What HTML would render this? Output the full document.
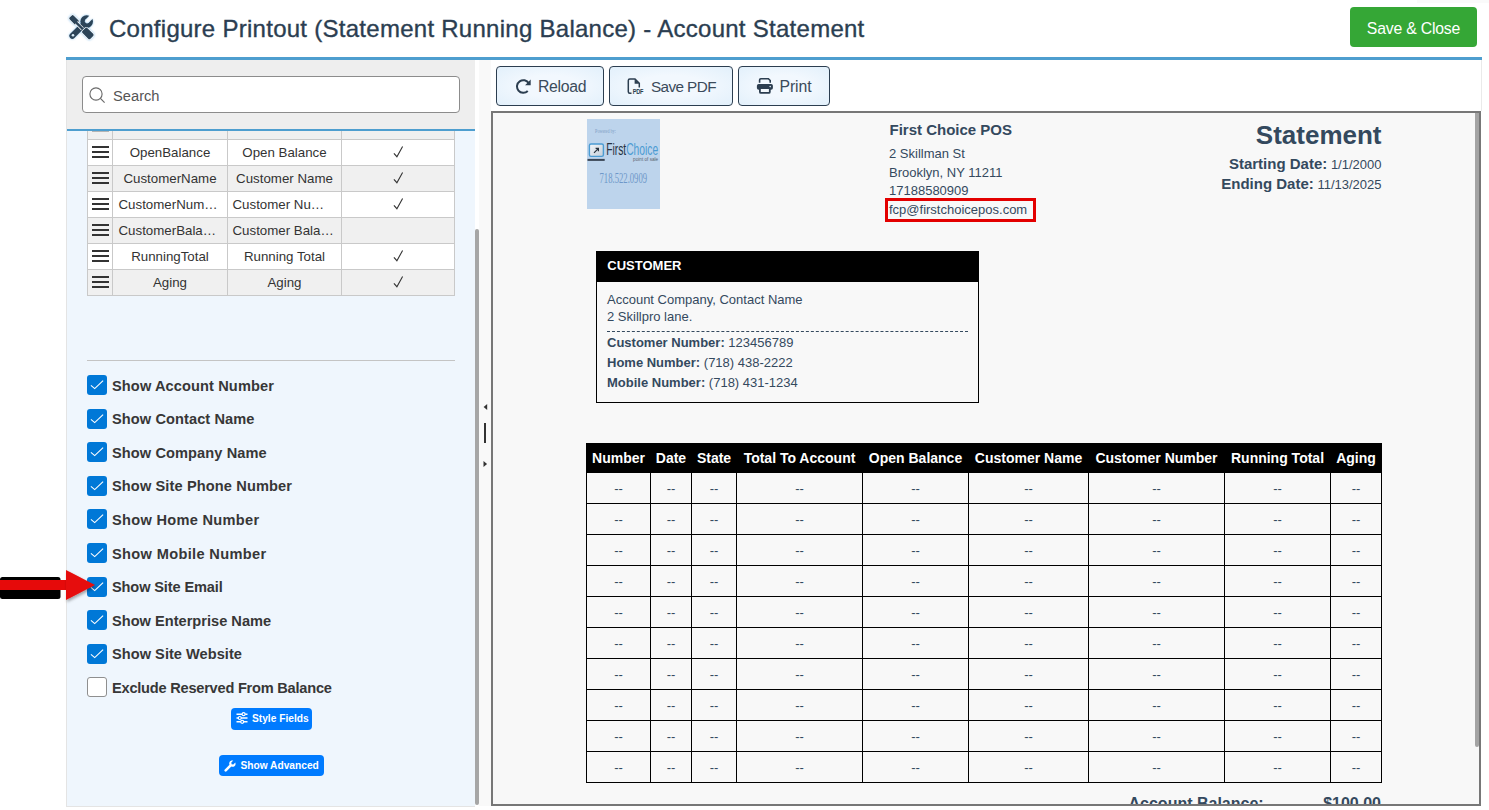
<!DOCTYPE html>
<html><head><meta charset="utf-8">
<style>
*{box-sizing:border-box;margin:0;padding:0}
html,body{width:1489px;height:810px;overflow:hidden;background:#fff;font-family:"Liberation Sans",sans-serif}
.a{position:absolute}
#title{left:109px;top:14px;-webkit-text-stroke:0.35px #2b3e51;font-size:24px;color:#2b3e51;white-space:nowrap;letter-spacing:0.27px;line-height:30px}
#save{left:1350px;top:7px;width:127px;height:40px;background:#35a736;border-radius:4px;color:#fff;font-size:15.8px;letter-spacing:-0.2px;text-align:center;line-height:43px}
#bline{left:66px;top:57px;width:1416px;height:3px;background:#4e9ecf}
#lp{left:66px;top:60px;width:409px;height:747px;background:#eff6fd;overflow:hidden}
#lptop{left:0;top:0;width:409px;height:69px;background:#eeeeee}
#lpblue{left:0;top:69px;width:409px;height:2px;background:#4e9ecf}
#search{left:16px;top:16px;width:378px;height:37px;background:#fff;border:1px solid #8c8c8c;border-radius:4px}
#search span{position:absolute;left:30px;top:9.8px;font-size:14.7px;color:#555;line-height:18px}
#clip{left:0;top:71px;width:409px;height:676px;overflow:hidden}
.row{position:absolute;left:21px;width:368px;height:27px;border:1px solid #c9c9c9;font-size:13.3px;color:#333}
.row div{position:absolute;top:0;height:25px;line-height:25px;text-align:center;white-space:nowrap}
.c1{left:0;width:25px;border-right:1px solid #c9c9c9}
.c2{left:25px;width:115px;border-right:1px solid #c9c9c9}
.c3{left:140px;width:114px;border-right:1px solid #c9c9c9}
.c4{left:254px;width:112px}
.ham{position:absolute;left:4px;width:17px;height:2px;background:#333}
.g{background:#f0f0f0}.w{background:#fff}
#hr{left:21px;top:229px;width:368px;height:1px;background:#c4c4c4}
.cb{position:absolute;left:21px;width:20px;height:20px;border-radius:3px;background:#0078d7}
.cb svg{position:absolute;left:0;top:0}
.cbe{background:#fff;border:1px solid #8f8f8f}
.lbl{position:absolute;left:46px;font-size:14.6px;font-weight:bold;color:#373737;white-space:nowrap;line-height:20px}
.pbtn{position:absolute;background:#007bff;border-radius:4px;color:#fff;font-weight:bold;font-size:10.2px;white-space:nowrap;letter-spacing:0px}
#thumbL{left:475px;top:229px;width:4px;height:576px;background:#a6a6a6;border-radius:2px}
#split{left:479px;top:60px;width:12px;height:746px;background:#f9f9f9}
.tb{position:absolute;top:66px;height:40px;border:1px solid #2c3e50;border-radius:4px;background:radial-gradient(ellipse at center,#f2f8fe 40%,#e2f0fb 100%);color:#3b4b5b;font-size:15.8px;line-height:40px;letter-spacing:-0.3px;white-space:nowrap}
#frame{left:491px;top:111px;width:990px;height:695px;border:2px solid #777;background:#f8f8f8;overflow:hidden}
#thumbR{left:1475px;top:113px;width:4px;height:634px;background:#a4a4a4;border-radius:0 0 2px 2px}
.doc{position:absolute;color:#34495e;white-space:nowrap}
table.t{position:absolute;left:94px;top:330px;border-collapse:collapse;font-size:13px;color:#34495e}
table.t th{background:#000;color:#fff;font-weight:bold;font-size:14px;height:30px;padding:0;border:1px solid #000;text-align:center}
table.t td{border:1px solid #000;height:31px;text-align:center;padding:0}
</style></head><body>
<!-- title icon -->
<svg class="a" style="left:60px;top:8px;filter:drop-shadow(0 0 1.2px rgba(90,170,230,0.7))" width="40" height="38" viewBox="60 8 40 38">
 <defs><mask id="wm" maskUnits="userSpaceOnUse" x="60" y="8" width="40" height="38"><rect x="60" y="8" width="40" height="38" fill="#fff"/>
  <g transform="rotate(45 86.7 21.5)"><rect x="84.4" y="10" width="4.6" height="11.2" fill="#000"/><circle cx="86.7" cy="21.0" r="2.3" fill="#000"/></g></mask></defs>
 <g stroke="#2c4458" fill="#2c4458">
  <path d="M72.3 35.9 L83 25.2" stroke-width="5.8" stroke-linecap="round"/>
  <circle cx="86.7" cy="21.5" r="6.3" mask="url(#wm)" stroke="none"/>
 </g>
 <circle cx="73" cy="35.2" r="1.3" fill="#d8ecf8"/>
 <g fill="#2c4458" stroke="#fff" stroke-width="1.3" paint-order="stroke">
  <g transform="rotate(45 73.6 19.4)">
   <rect x="69.5" y="16.65" width="9.3" height="5.5" rx="1.2"/>
  </g>
  <path d="M76.2 22.6 L82.4 28.8" stroke="#fff" stroke-width="3.8"/>
  <g transform="rotate(45 87.7 33.3)">
   <rect x="82.3" y="29.8" width="11.2" height="7" rx="1.6"/>
  </g>
  <path d="M75.8 22.2 L82.8 29.2" stroke="#2c4458" stroke-width="2.4"/>
 </g>
</svg>
<div id="title" class="a">Configure Printout (Statement Running Balance) - Account Statement</div>
<div id="save" class="a">Save &amp; Close</div>
<div id="bline" class="a"></div>

<!-- left panel -->
<div id="lp" class="a">
 <div id="lptop" class="a">
  <div id="search" class="a">
   <svg class="a" style="left:6px;top:10px" width="17" height="17" viewBox="0 0 17 17"><circle cx="7" cy="7" r="6.1" fill="none" stroke="#6a6a6a" stroke-width="1.15"/><path d="M11.4 11.4 L15.6 15.6" stroke="#6a6a6a" stroke-width="1.2"/></svg>
   <span>Search</span>
  </div>
 </div>
 <div id="lpblue" class="a"></div>
 <div id="clip" class="a">
  <div class="row g" style="top:-18px"><div class="c1"><span class="ham" style="top:16px;background:#b4b4b4"></span></div><div class="c2"></div><div class="c3"></div><div class="c4"></div></div>
  <div class="row w" style="top:8px"><div class="c1"><span class="ham" style="top:6px"></span><span class="ham" style="top:11px"></span><span class="ham" style="top:16px"></span></div><div class="c2">OpenBalance</div><div class="c3">Open Balance</div><div class="c4"><svg width="12" height="12" viewBox="0 0 12 12" style="position:absolute;left:50px;top:6px"><path d="M1.9 7.3 L4.9 10.7 L10.6 0.5" fill="none" stroke="#333" stroke-width="1.1"/></svg></div></div>
  <div class="row g" style="top:34px"><div class="c1"><span class="ham" style="top:6px"></span><span class="ham" style="top:11px"></span><span class="ham" style="top:16px"></span></div><div class="c2">CustomerName</div><div class="c3">Customer Name</div><div class="c4"><svg width="12" height="12" viewBox="0 0 12 12" style="position:absolute;left:50px;top:6px"><path d="M1.9 7.3 L4.9 10.7 L10.6 0.5" fill="none" stroke="#333" stroke-width="1.1"/></svg></div></div>
  <div class="row w" style="top:60px"><div class="c1"><span class="ham" style="top:6px"></span><span class="ham" style="top:11px"></span><span class="ham" style="top:16px"></span></div><div class="c2" style="text-align:left;padding-left:5.5px">CustomerNum…</div><div class="c3" style="text-align:left;padding-left:4.5px">Customer Nu…</div><div class="c4"><svg width="12" height="12" viewBox="0 0 12 12" style="position:absolute;left:50px;top:6px"><path d="M1.9 7.3 L4.9 10.7 L10.6 0.5" fill="none" stroke="#333" stroke-width="1.1"/></svg></div></div>
  <div class="row g" style="top:86px"><div class="c1"><span class="ham" style="top:6px"></span><span class="ham" style="top:11px"></span><span class="ham" style="top:16px"></span></div><div class="c2" style="text-align:left;padding-left:5.5px">CustomerBala…</div><div class="c3" style="text-align:left;padding-left:4.5px">Customer Bala…</div><div class="c4"></div></div>
  <div class="row w" style="top:112px"><div class="c1"><span class="ham" style="top:6px"></span><span class="ham" style="top:11px"></span><span class="ham" style="top:16px"></span></div><div class="c2">RunningTotal</div><div class="c3">Running Total</div><div class="c4"><svg width="12" height="12" viewBox="0 0 12 12" style="position:absolute;left:50px;top:6px"><path d="M1.9 7.3 L4.9 10.7 L10.6 0.5" fill="none" stroke="#333" stroke-width="1.1"/></svg></div></div>
  <div class="row g" style="top:138px"><div class="c1"><span class="ham" style="top:6px"></span><span class="ham" style="top:11px"></span><span class="ham" style="top:16px"></span></div><div class="c2">Aging</div><div class="c3">Aging</div><div class="c4"><svg width="12" height="12" viewBox="0 0 12 12" style="position:absolute;left:50px;top:6px"><path d="M1.9 7.3 L4.9 10.7 L10.6 0.5" fill="none" stroke="#333" stroke-width="1.1"/></svg></div></div>
  <div id="hr" class="a"></div>
  <div class="cb" style="top:244.0px"><svg width="20" height="20" viewBox="0 0 20 20"><path d="M3.9 10.3 L7.7 13.6 L16.1 5.7" fill="none" stroke="#fff" stroke-width="1.1"/></svg></div>
  <div class="lbl" style="top:244.5px;letter-spacing:0.105px">Show Account Number</div>
  <div class="cb" style="top:277.6px"><svg width="20" height="20" viewBox="0 0 20 20"><path d="M3.9 10.3 L7.7 13.6 L16.1 5.7" fill="none" stroke="#fff" stroke-width="1.1"/></svg></div>
  <div class="lbl" style="top:278.1px;letter-spacing:0.084px">Show Contact Name</div>
  <div class="cb" style="top:311.2px"><svg width="20" height="20" viewBox="0 0 20 20"><path d="M3.9 10.3 L7.7 13.6 L16.1 5.7" fill="none" stroke="#fff" stroke-width="1.1"/></svg></div>
  <div class="lbl" style="top:311.7px;letter-spacing:0.086px">Show Company Name</div>
  <div class="cb" style="top:344.8px"><svg width="20" height="20" viewBox="0 0 20 20"><path d="M3.9 10.3 L7.7 13.6 L16.1 5.7" fill="none" stroke="#fff" stroke-width="1.1"/></svg></div>
  <div class="lbl" style="top:345.3px;letter-spacing:0.112px">Show Site Phone Number</div>
  <div class="cb" style="top:378.4px"><svg width="20" height="20" viewBox="0 0 20 20"><path d="M3.9 10.3 L7.7 13.6 L16.1 5.7" fill="none" stroke="#fff" stroke-width="1.1"/></svg></div>
  <div class="lbl" style="top:378.9px;letter-spacing:0.296px">Show Home Number</div>
  <div class="cb" style="top:412.0px"><svg width="20" height="20" viewBox="0 0 20 20"><path d="M3.9 10.3 L7.7 13.6 L16.1 5.7" fill="none" stroke="#fff" stroke-width="1.1"/></svg></div>
  <div class="lbl" style="top:412.5px;letter-spacing:0.339px">Show Mobile Number</div>
  <div class="cb" style="top:445.6px"><svg width="20" height="20" viewBox="0 0 20 20"><path d="M3.9 10.3 L7.7 13.6 L16.1 5.7" fill="none" stroke="#fff" stroke-width="1.1"/></svg></div>
  <div class="lbl" style="top:446.1px;letter-spacing:-0.141px">Show Site Email</div>
  <div class="cb" style="top:479.2px"><svg width="20" height="20" viewBox="0 0 20 20"><path d="M3.9 10.3 L7.7 13.6 L16.1 5.7" fill="none" stroke="#fff" stroke-width="1.1"/></svg></div>
  <div class="lbl" style="top:479.7px;letter-spacing:0.009px">Show Enterprise Name</div>
  <div class="cb" style="top:512.8px"><svg width="20" height="20" viewBox="0 0 20 20"><path d="M3.9 10.3 L7.7 13.6 L16.1 5.7" fill="none" stroke="#fff" stroke-width="1.1"/></svg></div>
  <div class="lbl" style="top:513.3px;letter-spacing:0.029px">Show Site Website</div>
  <div class="cb cbe" style="top:546.4px"></div>
  <div class="lbl" style="top:546.9px;letter-spacing:-0.229px">Exclude Reserved From Balance</div>
  <div class="pbtn" style="left:165px;top:577px;width:81px;height:22px"><svg width="12" height="12" viewBox="0 0 12 12" style="position:absolute;left:4.5px;top:4.3px"><g stroke="#fff" stroke-width="1.4" fill="none"><path d="M0.5 2.2H11.5M0.5 6H11.5M0.5 9.8H11.5"/></g><g fill="#007bff" stroke="#fff" stroke-width="1.2"><circle cx="7.6" cy="2.2" r="1.5"/><circle cx="3.8" cy="6" r="1.5"/><circle cx="6.2" cy="9.8" r="1.5"/></g></svg><span style="position:absolute;left:21px;top:5px;line-height:12px">Style Fields</span></div>
  <div class="pbtn" style="left:153px;top:624px;width:105px;height:21px"><svg width="12" height="12" viewBox="0 0 12 12" style="position:absolute;left:5px;top:5px"><path d="M11.3 2.6 L9.3 4.6 L7.6 4.3 L7.3 2.6 L9.3 0.6 C7.9 0.1 6.3 0.6 5.6 1.9 C5.1 2.8 5.1 3.8 5.5 4.7 L0.8 9.4 C0.2 10 0.2 10.9 0.8 11.3 C1.3 11.8 2.1 11.8 2.6 11.2 L7.3 6.5 C8.2 6.9 9.2 6.9 10.1 6.4 C11.4 5.7 11.9 4.1 11.3 2.6Z" fill="#fff"/></svg><span style="position:absolute;left:21.5px;top:4.5px;line-height:12px">Show Advanced</span></div>
 </div>
</div>
<div id="thumbL" class="a"></div>
<div class="a" style="left:66px;top:60px;width:1px;height:747px;background:#e4e4e4"></div>
<div class="a" style="left:66px;top:806px;width:409px;height:1px;background:#e4e4e4"></div>
<div id="split" class="a">
 <svg class="a" style="left:3.5px;top:342.5px" width="6" height="8" viewBox="0 0 6 8"><path d="M4.2 1 L0.6 4 L4.2 7Z" fill="#333"/></svg>
 <div class="a" style="left:5px;top:363px;width:2px;height:20px;background:#333"></div>
 <svg class="a" style="left:4px;top:400px" width="6" height="8" viewBox="0 0 6 8"><path d="M0.5 1 L4.1 4 L0.5 7Z" fill="#333"/></svg>
</div>

<!-- toolbar -->
<div class="tb" style="left:496px;width:108px">
 <svg class="a" style="left:18px;top:11.5px" width="17" height="16" viewBox="0 0 17 16"><path d="M13.76 4.35 A6.3 6.3 0 1 0 12.75 11.95" fill="none" stroke="#2c3e50" stroke-width="2"/><path d="M15.7 0.6 L15.7 6.2 L10.1 6.2Z" fill="#2c3e50"/></svg>
 <span class="a" style="left:41px;top:0">Reload</span>
</div>
<div class="tb" style="left:609px;width:124px">
 <svg class="a" style="left:16px;top:10px" width="20" height="20" viewBox="0 0 20 20"><path d="M5.5 16.3 H3.8 Q2.3 16.3 2.3 14.8 V3.5 Q2.3 2 3.8 2 H9 L13.3 6.3 V10.5" fill="none" stroke="#2c3e50" stroke-width="1.5"/><path d="M8.6 2 L13.3 6.7 H8.6Z" fill="#2c3e50"/><text x="6.7" y="17" font-size="6.4" font-weight="bold" font-family="Liberation Sans" textLength="10.5" lengthAdjust="spacingAndGlyphs" fill="#2c3e50">PDF</text></svg>
 <span class="a" style="left:41px;top:0;letter-spacing:-0.6px;font-size:15.3px">Save PDF</span>
</div>
<div class="tb" style="left:738px;width:92px">
 <svg class="a" style="left:17px;top:10px" width="18" height="18" viewBox="0 0 18 18"><path d="M3.6 5.8 V2.9 Q3.6 1.7 4.8 1.7 H12.4 L14.2 3.5 V5.8" fill="none" stroke="#2c3e50" stroke-width="1.6"/><rect x="0.9" y="7" width="16" height="5.8" rx="1.8" fill="#2c3e50"/><circle cx="14.2" cy="9.6" r="0.8" fill="#dfeaf3"/><rect x="3.9" y="11.2" width="9.9" height="4.7" rx="1" fill="#f4f9fd" stroke="#2c3e50" stroke-width="1.8"/></svg>
 <span class="a" style="left:40.5px;top:0;letter-spacing:-0.1px">Print</span>
</div>

<div id="frame" class="a">
 <svg class="a" style="left:94px;top:6px" width="73" height="90" viewBox="0 0 73 90">
 <defs><linearGradient id="scr" x1="0" y1="0" x2="1" y2="1"><stop offset="0" stop-color="#f4f6f9"/><stop offset="1" stop-color="#c3ced9"/></linearGradient></defs>
 <rect width="73" height="90" fill="#bdd4ec"/>
 <text x="8.1" y="13.6" font-family="Liberation Serif" font-size="6" textLength="20.7" lengthAdjust="spacingAndGlyphs" fill="#7d9dc5">Powered by:</text>
 <rect x="2.4" y="25" width="14" height="12.4" rx="1.6" fill="url(#scr)" stroke="#4b9bd2" stroke-width="1.4"/>
 <path d="M7 33.8 L11.2 29.6 M8.6 29.4 H11.4 V32.2" stroke="#26313d" stroke-width="1.2" fill="none"/>
 <rect x="0.5" y="39.9" width="17.2" height="2" fill="#3a4656"/>
 <text x="19.2" y="35.8" font-family="Liberation Sans" font-size="16" textLength="52" lengthAdjust="spacingAndGlyphs"><tspan fill="#25313f">First</tspan><tspan fill="#4b9bd2">Choice</tspan></text>
 <text x="46.1" y="42.4" font-family="Liberation Sans" font-size="4.5" textLength="25.1" lengthAdjust="spacingAndGlyphs" fill="#59636e">point of sale</text>
 <text x="12.5" y="64.4" font-family="Liberation Serif" font-size="14.2" textLength="47.6" lengthAdjust="spacingAndGlyphs" fill="#6e98c9">718.522.0909</text>
</svg>
 <div class="doc" style="left:396.5px;top:9.00px;font-size:15px;line-height:15px;font-weight:bold;">First Choice POS</div>
 <div class="doc" style="left:396px;top:33.80px;font-size:13px;line-height:13px;">2 Skillman St</div>
 <div class="doc" style="left:396px;top:52.80px;font-size:13px;line-height:13px;">Brooklyn, NY 11211</div>
 <div class="doc" style="left:396px;top:70.50px;font-size:13px;line-height:13px;">17188580909</div>
 <div class="doc" style="left:396px;top:89.50px;font-size:13px;line-height:13px;">fcp@firstchoicepos.com</div>
 <div class="a" style="left:392px;top:85px;width:151px;height:24px;border:3px solid #e30000"></div>
 <div class="doc" style="left:488.5px;width:400px;text-align:right;top:9.09px;font-size:26px;line-height:26px;font-weight:bold;">Statement</div>
 <div class="doc" style="left:488.5px;width:400px;text-align:right;top:43.90px;font-size:13px;line-height:13px;"><b style="font-size:15px">Starting Date:</b> 1/1/2000</div>
 <div class="doc" style="left:488.5px;width:400px;text-align:right;top:63.90px;font-size:13px;line-height:13px;"><b style="font-size:15px">Ending Date:</b> 11/13/2025</div>
 <div class="a" style="left:103px;top:138px;width:383px;height:152px;border:1px solid #000;background:#f8f8f8"><div class="a" style="left:0;top:0;width:381px;height:30px;background:#000"></div></div>
 <div class="doc" style="left:114.3px;top:145.90px;font-size:13px;line-height:13px;font-weight:bold;color:#fff;">CUSTOMER</div>
 <div class="doc" style="left:114px;top:180.00px;font-size:13px;line-height:13px;">Account Company, Contact Name</div>
 <div class="doc" style="left:114px;top:197.00px;font-size:13px;line-height:13px;">2 Skillpro lane.</div>
 <div class="a" style="left:114px;top:218px;width:361px;height:1px;border-top:1px dashed #34495e"></div>
 <div class="doc" style="left:114px;top:222.90px;font-size:13px;line-height:13px;"><b>Customer Number:</b> 123456789</div>
 <div class="doc" style="left:114px;top:242.80px;font-size:13px;line-height:13px;"><b>Home Number:</b> (718) 438-2222</div>
 <div class="doc" style="left:114px;top:262.60px;font-size:13px;line-height:13px;"><b>Mobile Number:</b> (718) 431-1234</div>
 <div class="a" style="left:93px;top:330px;width:796px;height:30px;background:#000"></div>
 <div class="doc" style="left:25.5px;width:200px;text-align:center;top:338.35px;font-size:14px;line-height:14px;font-weight:bold;color:#fff">Number</div>
 <div class="doc" style="left:78.0px;width:200px;text-align:center;top:338.35px;font-size:14px;line-height:14px;font-weight:bold;color:#fff">Date</div>
 <div class="doc" style="left:121.0px;width:200px;text-align:center;top:338.35px;font-size:14px;line-height:14px;font-weight:bold;color:#fff">State</div>
 <div class="doc" style="left:206.5px;width:200px;text-align:center;top:338.35px;font-size:14px;line-height:14px;font-weight:bold;color:#fff">Total To Account</div>
 <div class="doc" style="left:322.5px;width:200px;text-align:center;top:338.35px;font-size:14px;line-height:14px;font-weight:bold;color:#fff">Open Balance</div>
 <div class="doc" style="left:435.5px;width:200px;text-align:center;top:338.35px;font-size:14px;line-height:14px;font-weight:bold;color:#fff">Customer Name</div>
 <div class="doc" style="left:563.5px;width:200px;text-align:center;top:338.35px;font-size:14px;line-height:14px;font-weight:bold;color:#fff">Customer Number</div>
 <div class="doc" style="left:684.5px;width:200px;text-align:center;top:338.35px;font-size:14px;line-height:14px;font-weight:bold;color:#fff">Running Total</div>
 <div class="doc" style="left:763.0px;width:200px;text-align:center;top:338.35px;font-size:14px;line-height:14px;font-weight:bold;color:#fff">Aging</div>
 <div class="a" style="left:93px;top:360px;width:1px;height:310px;background:#000"></div>
 <div class="a" style="left:157px;top:360px;width:1px;height:310px;background:#000"></div>
 <div class="a" style="left:198px;top:360px;width:1px;height:310px;background:#000"></div>
 <div class="a" style="left:243px;top:360px;width:1px;height:310px;background:#000"></div>
 <div class="a" style="left:369px;top:360px;width:1px;height:310px;background:#000"></div>
 <div class="a" style="left:475px;top:360px;width:1px;height:310px;background:#000"></div>
 <div class="a" style="left:595px;top:360px;width:1px;height:310px;background:#000"></div>
 <div class="a" style="left:731px;top:360px;width:1px;height:310px;background:#000"></div>
 <div class="a" style="left:837px;top:360px;width:1px;height:310px;background:#000"></div>
 <div class="a" style="left:888px;top:360px;width:1px;height:310px;background:#000"></div>
 <div class="a" style="left:93px;top:390px;width:796px;height:1px;background:#000"></div>
 <div class="doc" style="left:75.5px;width:100px;text-align:center;top:369.40px;font-size:13px;line-height:13px">--</div>
 <div class="doc" style="left:128.0px;width:100px;text-align:center;top:369.40px;font-size:13px;line-height:13px">--</div>
 <div class="doc" style="left:171.0px;width:100px;text-align:center;top:369.40px;font-size:13px;line-height:13px">--</div>
 <div class="doc" style="left:256.5px;width:100px;text-align:center;top:369.40px;font-size:13px;line-height:13px">--</div>
 <div class="doc" style="left:372.5px;width:100px;text-align:center;top:369.40px;font-size:13px;line-height:13px">--</div>
 <div class="doc" style="left:485.5px;width:100px;text-align:center;top:369.40px;font-size:13px;line-height:13px">--</div>
 <div class="doc" style="left:613.5px;width:100px;text-align:center;top:369.40px;font-size:13px;line-height:13px">--</div>
 <div class="doc" style="left:734.5px;width:100px;text-align:center;top:369.40px;font-size:13px;line-height:13px">--</div>
 <div class="doc" style="left:813.0px;width:100px;text-align:center;top:369.40px;font-size:13px;line-height:13px">--</div>
 <div class="a" style="left:93px;top:421px;width:796px;height:1px;background:#000"></div>
 <div class="doc" style="left:75.5px;width:100px;text-align:center;top:400.40px;font-size:13px;line-height:13px">--</div>
 <div class="doc" style="left:128.0px;width:100px;text-align:center;top:400.40px;font-size:13px;line-height:13px">--</div>
 <div class="doc" style="left:171.0px;width:100px;text-align:center;top:400.40px;font-size:13px;line-height:13px">--</div>
 <div class="doc" style="left:256.5px;width:100px;text-align:center;top:400.40px;font-size:13px;line-height:13px">--</div>
 <div class="doc" style="left:372.5px;width:100px;text-align:center;top:400.40px;font-size:13px;line-height:13px">--</div>
 <div class="doc" style="left:485.5px;width:100px;text-align:center;top:400.40px;font-size:13px;line-height:13px">--</div>
 <div class="doc" style="left:613.5px;width:100px;text-align:center;top:400.40px;font-size:13px;line-height:13px">--</div>
 <div class="doc" style="left:734.5px;width:100px;text-align:center;top:400.40px;font-size:13px;line-height:13px">--</div>
 <div class="doc" style="left:813.0px;width:100px;text-align:center;top:400.40px;font-size:13px;line-height:13px">--</div>
 <div class="a" style="left:93px;top:452px;width:796px;height:1px;background:#000"></div>
 <div class="doc" style="left:75.5px;width:100px;text-align:center;top:431.40px;font-size:13px;line-height:13px">--</div>
 <div class="doc" style="left:128.0px;width:100px;text-align:center;top:431.40px;font-size:13px;line-height:13px">--</div>
 <div class="doc" style="left:171.0px;width:100px;text-align:center;top:431.40px;font-size:13px;line-height:13px">--</div>
 <div class="doc" style="left:256.5px;width:100px;text-align:center;top:431.40px;font-size:13px;line-height:13px">--</div>
 <div class="doc" style="left:372.5px;width:100px;text-align:center;top:431.40px;font-size:13px;line-height:13px">--</div>
 <div class="doc" style="left:485.5px;width:100px;text-align:center;top:431.40px;font-size:13px;line-height:13px">--</div>
 <div class="doc" style="left:613.5px;width:100px;text-align:center;top:431.40px;font-size:13px;line-height:13px">--</div>
 <div class="doc" style="left:734.5px;width:100px;text-align:center;top:431.40px;font-size:13px;line-height:13px">--</div>
 <div class="doc" style="left:813.0px;width:100px;text-align:center;top:431.40px;font-size:13px;line-height:13px">--</div>
 <div class="a" style="left:93px;top:483px;width:796px;height:1px;background:#000"></div>
 <div class="doc" style="left:75.5px;width:100px;text-align:center;top:462.40px;font-size:13px;line-height:13px">--</div>
 <div class="doc" style="left:128.0px;width:100px;text-align:center;top:462.40px;font-size:13px;line-height:13px">--</div>
 <div class="doc" style="left:171.0px;width:100px;text-align:center;top:462.40px;font-size:13px;line-height:13px">--</div>
 <div class="doc" style="left:256.5px;width:100px;text-align:center;top:462.40px;font-size:13px;line-height:13px">--</div>
 <div class="doc" style="left:372.5px;width:100px;text-align:center;top:462.40px;font-size:13px;line-height:13px">--</div>
 <div class="doc" style="left:485.5px;width:100px;text-align:center;top:462.40px;font-size:13px;line-height:13px">--</div>
 <div class="doc" style="left:613.5px;width:100px;text-align:center;top:462.40px;font-size:13px;line-height:13px">--</div>
 <div class="doc" style="left:734.5px;width:100px;text-align:center;top:462.40px;font-size:13px;line-height:13px">--</div>
 <div class="doc" style="left:813.0px;width:100px;text-align:center;top:462.40px;font-size:13px;line-height:13px">--</div>
 <div class="a" style="left:93px;top:514px;width:796px;height:1px;background:#000"></div>
 <div class="doc" style="left:75.5px;width:100px;text-align:center;top:493.40px;font-size:13px;line-height:13px">--</div>
 <div class="doc" style="left:128.0px;width:100px;text-align:center;top:493.40px;font-size:13px;line-height:13px">--</div>
 <div class="doc" style="left:171.0px;width:100px;text-align:center;top:493.40px;font-size:13px;line-height:13px">--</div>
 <div class="doc" style="left:256.5px;width:100px;text-align:center;top:493.40px;font-size:13px;line-height:13px">--</div>
 <div class="doc" style="left:372.5px;width:100px;text-align:center;top:493.40px;font-size:13px;line-height:13px">--</div>
 <div class="doc" style="left:485.5px;width:100px;text-align:center;top:493.40px;font-size:13px;line-height:13px">--</div>
 <div class="doc" style="left:613.5px;width:100px;text-align:center;top:493.40px;font-size:13px;line-height:13px">--</div>
 <div class="doc" style="left:734.5px;width:100px;text-align:center;top:493.40px;font-size:13px;line-height:13px">--</div>
 <div class="doc" style="left:813.0px;width:100px;text-align:center;top:493.40px;font-size:13px;line-height:13px">--</div>
 <div class="a" style="left:93px;top:545px;width:796px;height:1px;background:#000"></div>
 <div class="doc" style="left:75.5px;width:100px;text-align:center;top:524.40px;font-size:13px;line-height:13px">--</div>
 <div class="doc" style="left:128.0px;width:100px;text-align:center;top:524.40px;font-size:13px;line-height:13px">--</div>
 <div class="doc" style="left:171.0px;width:100px;text-align:center;top:524.40px;font-size:13px;line-height:13px">--</div>
 <div class="doc" style="left:256.5px;width:100px;text-align:center;top:524.40px;font-size:13px;line-height:13px">--</div>
 <div class="doc" style="left:372.5px;width:100px;text-align:center;top:524.40px;font-size:13px;line-height:13px">--</div>
 <div class="doc" style="left:485.5px;width:100px;text-align:center;top:524.40px;font-size:13px;line-height:13px">--</div>
 <div class="doc" style="left:613.5px;width:100px;text-align:center;top:524.40px;font-size:13px;line-height:13px">--</div>
 <div class="doc" style="left:734.5px;width:100px;text-align:center;top:524.40px;font-size:13px;line-height:13px">--</div>
 <div class="doc" style="left:813.0px;width:100px;text-align:center;top:524.40px;font-size:13px;line-height:13px">--</div>
 <div class="a" style="left:93px;top:576px;width:796px;height:1px;background:#000"></div>
 <div class="doc" style="left:75.5px;width:100px;text-align:center;top:555.40px;font-size:13px;line-height:13px">--</div>
 <div class="doc" style="left:128.0px;width:100px;text-align:center;top:555.40px;font-size:13px;line-height:13px">--</div>
 <div class="doc" style="left:171.0px;width:100px;text-align:center;top:555.40px;font-size:13px;line-height:13px">--</div>
 <div class="doc" style="left:256.5px;width:100px;text-align:center;top:555.40px;font-size:13px;line-height:13px">--</div>
 <div class="doc" style="left:372.5px;width:100px;text-align:center;top:555.40px;font-size:13px;line-height:13px">--</div>
 <div class="doc" style="left:485.5px;width:100px;text-align:center;top:555.40px;font-size:13px;line-height:13px">--</div>
 <div class="doc" style="left:613.5px;width:100px;text-align:center;top:555.40px;font-size:13px;line-height:13px">--</div>
 <div class="doc" style="left:734.5px;width:100px;text-align:center;top:555.40px;font-size:13px;line-height:13px">--</div>
 <div class="doc" style="left:813.0px;width:100px;text-align:center;top:555.40px;font-size:13px;line-height:13px">--</div>
 <div class="a" style="left:93px;top:607px;width:796px;height:1px;background:#000"></div>
 <div class="doc" style="left:75.5px;width:100px;text-align:center;top:586.40px;font-size:13px;line-height:13px">--</div>
 <div class="doc" style="left:128.0px;width:100px;text-align:center;top:586.40px;font-size:13px;line-height:13px">--</div>
 <div class="doc" style="left:171.0px;width:100px;text-align:center;top:586.40px;font-size:13px;line-height:13px">--</div>
 <div class="doc" style="left:256.5px;width:100px;text-align:center;top:586.40px;font-size:13px;line-height:13px">--</div>
 <div class="doc" style="left:372.5px;width:100px;text-align:center;top:586.40px;font-size:13px;line-height:13px">--</div>
 <div class="doc" style="left:485.5px;width:100px;text-align:center;top:586.40px;font-size:13px;line-height:13px">--</div>
 <div class="doc" style="left:613.5px;width:100px;text-align:center;top:586.40px;font-size:13px;line-height:13px">--</div>
 <div class="doc" style="left:734.5px;width:100px;text-align:center;top:586.40px;font-size:13px;line-height:13px">--</div>
 <div class="doc" style="left:813.0px;width:100px;text-align:center;top:586.40px;font-size:13px;line-height:13px">--</div>
 <div class="a" style="left:93px;top:638px;width:796px;height:1px;background:#000"></div>
 <div class="doc" style="left:75.5px;width:100px;text-align:center;top:617.40px;font-size:13px;line-height:13px">--</div>
 <div class="doc" style="left:128.0px;width:100px;text-align:center;top:617.40px;font-size:13px;line-height:13px">--</div>
 <div class="doc" style="left:171.0px;width:100px;text-align:center;top:617.40px;font-size:13px;line-height:13px">--</div>
 <div class="doc" style="left:256.5px;width:100px;text-align:center;top:617.40px;font-size:13px;line-height:13px">--</div>
 <div class="doc" style="left:372.5px;width:100px;text-align:center;top:617.40px;font-size:13px;line-height:13px">--</div>
 <div class="doc" style="left:485.5px;width:100px;text-align:center;top:617.40px;font-size:13px;line-height:13px">--</div>
 <div class="doc" style="left:613.5px;width:100px;text-align:center;top:617.40px;font-size:13px;line-height:13px">--</div>
 <div class="doc" style="left:734.5px;width:100px;text-align:center;top:617.40px;font-size:13px;line-height:13px">--</div>
 <div class="doc" style="left:813.0px;width:100px;text-align:center;top:617.40px;font-size:13px;line-height:13px">--</div>
 <div class="a" style="left:93px;top:669px;width:796px;height:1px;background:#000"></div>
 <div class="doc" style="left:75.5px;width:100px;text-align:center;top:648.40px;font-size:13px;line-height:13px">--</div>
 <div class="doc" style="left:128.0px;width:100px;text-align:center;top:648.40px;font-size:13px;line-height:13px">--</div>
 <div class="doc" style="left:171.0px;width:100px;text-align:center;top:648.40px;font-size:13px;line-height:13px">--</div>
 <div class="doc" style="left:256.5px;width:100px;text-align:center;top:648.40px;font-size:13px;line-height:13px">--</div>
 <div class="doc" style="left:372.5px;width:100px;text-align:center;top:648.40px;font-size:13px;line-height:13px">--</div>
 <div class="doc" style="left:485.5px;width:100px;text-align:center;top:648.40px;font-size:13px;line-height:13px">--</div>
 <div class="doc" style="left:613.5px;width:100px;text-align:center;top:648.40px;font-size:13px;line-height:13px">--</div>
 <div class="doc" style="left:734.5px;width:100px;text-align:center;top:648.40px;font-size:13px;line-height:13px">--</div>
 <div class="doc" style="left:813.0px;width:100px;text-align:center;top:648.40px;font-size:13px;line-height:13px">--</div>
 <div class="doc" style="left:635.5px;top:683.46px;font-size:16px;line-height:16px;font-weight:bold;">Account Balance:</div>
 <div class="doc" style="left:488px;width:400px;text-align:right;top:683.46px;font-size:16px;line-height:16px;font-weight:bold;">$100.00</div>
</div>
<div id="thumbR" class="a"></div>
<svg class="a" style="left:0;top:565px" width="100" height="40" viewBox="0 565 100 40">
 <defs><filter id="sh" x="-20%" y="-30%" width="150%" height="170%"><feDropShadow dx="1" dy="2" stdDeviation="1.6" flood-color="#000" flood-opacity="0.35"/></filter></defs>
 <rect x="0" y="577" width="60.5" height="22" rx="2.5" fill="#000"/>
 <rect x="0" y="580" width="67" height="10" fill="#e60a0a"/>
 <path d="M66 570 L95 585 L66 600 Z" fill="#e60a0a" filter="url(#sh)"/>
</svg>
<div class="a" style="left:1417px;top:0;width:72px;height:3px;background:#fafafa"></div>
<div class="a" style="left:1481px;top:60px;width:1px;height:51px;background:#eaeaea"></div>
</body></html>
